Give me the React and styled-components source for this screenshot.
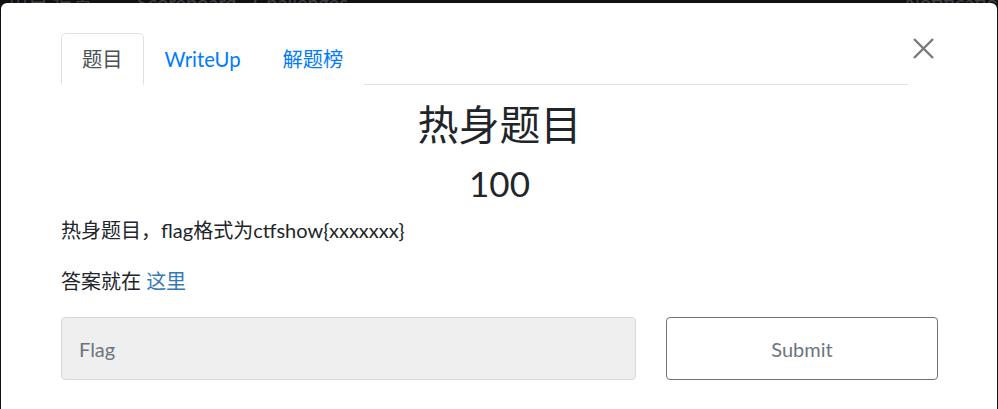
import React, { useState } from 'react';
import styled, { createGlobalStyle } from 'styled-components';

const GlobalStyle = createGlobalStyle`
  html, body {
    margin: 0;
    padding: 0;
    background: #0f1113;
    font-family: Lato, "Noto Sans CJK SC", sans-serif;
    overflow: hidden;
  }
`;

const TABS = ['题目', 'WriteUp', '解题榜'];

const NAV_ITEMS = [
  { label: '用户 设置', left: 8 },
  { label: 'Scoreboard', left: 137 },
  { label: 'Challenges', left: 253 },
  { label: 'Notifications', left: 905 },
];

const CloseIcon = () => (
  <svg width="21" height="21" viewBox="0 0 21 21">
    <path d="M1 1 L20 20 M20 1 L1 20" stroke="#7a7a7a" strokeWidth="2.4" fill="none" />
  </svg>
);

const App = () => {
  const [activeTab, setActiveTab] = useState(0);

  return (
    <Page>
      <GlobalStyle />
      <NavBar>
        {NAV_ITEMS.map((item) => (
          <NavItem key={item.label} style={{ left: item.left }}>{item.label}</NavItem>
        ))}
      </NavBar>
      <Modal>
        <Header>
          <TabList>
            {TABS.map((tab, i) => (
              <Tab key={tab} active={i === activeTab} onClick={() => setActiveTab(i)}>
                {tab}
              </Tab>
            ))}
          </TabList>
          <CloseButton type="button" aria-label="Close">
            <CloseIcon />
          </CloseButton>
        </Header>
        <ChallengeName>热身题目</ChallengeName>
        <ChallengeValue>100</ChallengeValue>
        <Description>
          <p>热身题目，flag格式为ctfshow{'{xxxxxxx}'}</p>
          <p>
            答案就在 <AnswerLink href="#">这里</AnswerLink>
          </p>
        </Description>
        <SubmitRow>
          <FlagInput placeholder="Flag" />
          <SubmitButton type="button">Submit</SubmitButton>
        </SubmitRow>
      </Modal>
    </Page>
  );
};

const Page = styled.div`
  position: relative;
  width: 998px;
  height: 409px;
  overflow: hidden;
`;

const NavBar = styled.div`
  position: relative;
  height: 3px;
  overflow: hidden;
`;

const NavItem = styled.span`
  position: absolute;
  bottom: -9px;
  font-size: 20px;
  line-height: 20px;
  color: #3d4146;
  white-space: nowrap;
`;

const Modal = styled.div`
  position: absolute;
  top: 3px;
  left: 1px;
  width: 996px;
  height: 420px;
  box-sizing: border-box;
  background: #fff;
  border-radius: 6px;
  padding: 30px 59px 0 60px;
  color: #212529;
`;

const Header = styled.div`
  display: flex;
  align-items: flex-start;
`;

const TabList = styled.div`
  flex: 1;
  display: flex;
  border-bottom: 1px solid #dee2e6;
`;

const Tab = styled.div`
  padding: 10px 20px;
  font-size: 20.3px;
  line-height: 30px;
  margin-bottom: -1px;
  border: 1px solid ${(p) => (p.active ? '#dee2e6' : 'transparent')};
  border-bottom-color: ${(p) => (p.active ? '#fff' : 'transparent')};
  border-radius: 5px 5px 0 0;
  background: #fff;
  color: ${(p) => (p.active ? '#495057' : '#007bff')};
  cursor: pointer;
`;

const CloseButton = styled.button`
  width: 30px;
  height: 30px;
  margin-top: 0;
  padding: 0;
  border: 0;
  background: transparent;
  display: flex;
  align-items: center;
  justify-content: center;
  cursor: pointer;
`;

const ChallengeName = styled.h2`
  margin: 16px 0 0;
  text-align: center;
  font-size: 41px;
  font-weight: 400;
  line-height: 48px;
`;

const ChallengeValue = styled.h3`
  margin: 13px 0 0;
  text-align: center;
  font-size: 35px;
  font-weight: 400;
  line-height: 42px;
`;

const Description = styled.div`
  margin-top: 11px;
  font-size: 20px;
  line-height: 30px;

  p {
    margin: 0 0 21px;
  }
`;

const AnswerLink = styled.a`
  color: #337ab7;
  text-decoration: none;
`;

const SubmitRow = styled.div`
  display: flex;
  gap: 30px;
  margin-top: 2px;
`;

const FlagInput = styled.input`
  flex: 0 0 575px;
  height: 63px;
  box-sizing: border-box;
  padding: 0 17px;
  font-family: Lato, sans-serif;
  font-size: 20px;
  background: #efefef;
  border: 1px solid #d6d9dc;
  border-radius: 4px;
  outline: none;

  &::placeholder {
    color: #6c757d;
  }
`;

const SubmitButton = styled.button`
  flex: 1;
  height: 63px;
  box-sizing: border-box;
  font-family: Lato, sans-serif;
  font-size: 20px;
  color: #6c757d;
  background: #fff;
  border: 1px solid #6c757d;
  border-radius: 4px;
  cursor: pointer;
`;

export default App;
